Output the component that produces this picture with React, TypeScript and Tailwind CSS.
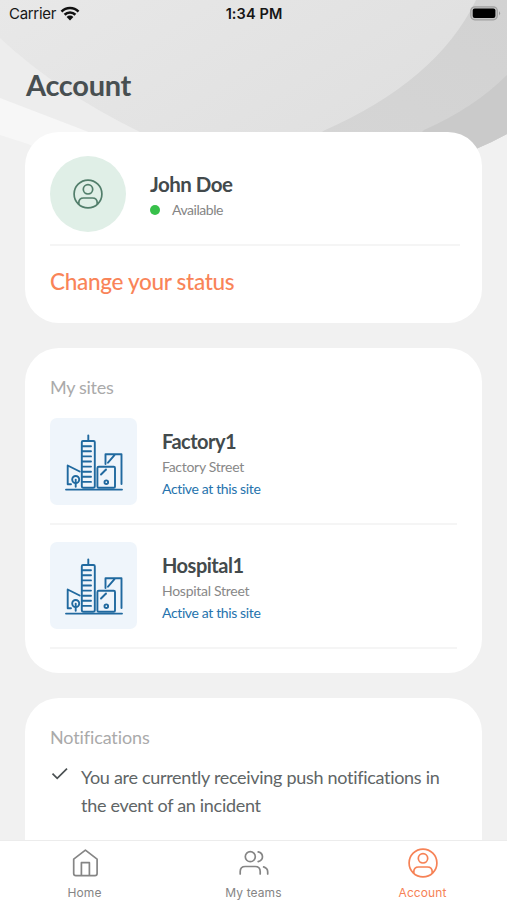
import React from 'react';

const UserCircleIcon: React.FC<{ className?: string }> = ({ className }) => (
  <svg viewBox="0 0 30 30" fill="none" stroke="currentColor" strokeWidth="1.7" className={className}>
    <circle cx="15" cy="15" r="13.9" />
    <circle cx="15" cy="10.3" r="4.7" />
    <path d="M5.8 25.2v-1.4c0-2.9 2-4.8 4.8-4.8h8.8c2.8 0 4.8 1.9 4.8 4.8v1.4" />
  </svg>
);

const HomeIcon: React.FC<{ className?: string }> = ({ className }) => (
  <svg viewBox="0 0 30 30" fill="none" stroke="currentColor" strokeWidth="1.7" strokeLinejoin="round" className={className}>
    <path d="M3.7 11.2 15.4 2.2l11.7 9v14.3a2.2 2.2 0 0 1-2.2 2.2h-19a2.2 2.2 0 0 1-2.2-2.2z" />
    <path d="M11.4 27.5V14.7h8v12.8" />
  </svg>
);

const TeamsIcon: React.FC<{ className?: string }> = ({ className }) => (
  <svg viewBox="0 0 30 30" fill="none" stroke="currentColor" strokeWidth="1.7" strokeLinecap="round" className={className}>
    <circle cx="11.3" cy="8.7" r="5" />
    <path d="M1.2 26v-2.4c0-3 2-5.1 5.1-5.1h9.8c3.1 0 5.1 2.1 5.1 5.1V26" />
    <path d="M19.2 3.9c5.7 1.5 5.7 8.2 0 9.7" />
    <path d="M24.6 18.9c2.6.8 4.1 2.6 4.1 5.1v2" />
  </svg>
);

const BuildingsIcon: React.FC = () => (
  <svg viewBox="0 0 58 58" fill="none" stroke="#20699f" strokeWidth="1.9" strokeLinecap="round" strokeLinejoin="round" className="h-[58px] w-[58px]">
    <path d="M1 55.6h56" />
    <path d="M23.3 1.5v5" />
    <path d="M18 7h10.5a1.3 1.3 0 0 1 1.3 1.3v43.7a1.8 1.8 0 0 1-1.8 1.8h-9.4a1.8 1.8 0 0 1-1.8-1.8V8.2A1.2 1.2 0 0 1 18 7z" />
    <path d="M17 12.2h9M17 17.3h9M17 22.4h9M17 27.5h9M17 32.6h9M17 37.7h9M17 42.8h9M17 47.9h9" />
    <path d="M33.7 32.7h15a1.3 1.3 0 0 1 1.3 1.3v18.5a1.3 1.3 0 0 1-1.3 1.3h-15a1.3 1.3 0 0 1-1.3-1.3V34a1.3 1.3 0 0 1 1.3-1.3z" />
    <path d="m36 40.5 5-5" />
    <circle cx="41.3" cy="48.2" r="1.8" />
    <path d="M40.5 30v-9.700h16V50M43 28.700l6.500-7.500" />
    <path d="M6 50.300H2.700V31.500l12 6" />
    <circle cx="10.700" cy="45.500" r="3.500" />
    <path d="M10.700 45.800v7" />
  </svg>
);

const CheckIcon: React.FC = () => (
  <svg viewBox="0 0 18 14" fill="none" stroke="#4b5153" strokeWidth="1.7" className="mt-1 h-3.5 w-[18px] shrink-0">
    <path d="M2.500 6.700 7.200 11.400 17 1.600" />
  </svg>
);

const HeaderBackground: React.FC = () => (
  <svg viewBox="0 0 507 160" className="absolute left-0 top-0 h-40 w-[507px]">
    <defs>
      <linearGradient id="base" x1="0" y1="0" x2="1" y2="0.5">
        <stop offset="0" stopColor="#e8e8e8" />
        <stop offset="1" stopColor="#dfdfdf" />
      </linearGradient>
      <linearGradient id="band" x1="0.3" y1="1" x2="1" y2="0">
        <stop offset="0" stopColor="#d5d5d5" />
        <stop offset="1" stopColor="#d2d2d2" />
      </linearGradient>
    </defs>
    <path d="M0 0h507v134q-29 16-62 26H0z" fill="url(#base)" />
    <path d="M0 38Q58 92 140 132V160H0z" fill="#ededed" />
    <path d="M0 98 86 131l64 29H0z" fill="#f7f7f7" />
    <path d="M0 135 28 144l30 16H0z" fill="#f1f1f1" />
    <path d="M476 0h31v134q-29 16-62 26H300L323 131Q437 81 476 0z" fill="url(#band)" />
    <path d="M507 75v59q-29 16-62 26h-50l29-30Q474 108 507 75z" fill="#cacaca" />
  </svg>
);

const StatusBar: React.FC = () => (
  <div className="grid h-7 shrink-0 grid-cols-3 items-center pl-[9px] pr-[6px] font-['Inter'] text-[15px] text-[#161616]">
    <div className="flex items-center gap-[6px]">
      <span className="tracking-[-0.3px]">Carrier</span>
      <svg viewBox="0 0 20 15" className="-ml-0.5 -mt-0.5 h-[15px] w-5">
        <path d="M1.5 5.6a12 12 0 0 1 17 0M4.6 8.7a7.7 7.7 0 0 1 10.8 0" fill="none" stroke="#111" strokeWidth="2.6" />
        <path d="M6.6 11a4.8 4.8 0 0 1 6.8 0L10 14.4z" fill="#111" />
      </svg>
    </div>
    <span className="-ml-0.5 text-center text-[14.5px] font-semibold tracking-[0.1px]">1:34 PM</span>
    <svg viewBox="0 0 31 15" className="-mt-0.5 h-[15px] w-[31px] justify-self-end">
      <rect x="0.8" y="0.8" width="26.5" height="13" rx="4" fill="#c4c4c4" stroke="#a0a0a0" strokeWidth="1.2" />
      <rect x="2.7" y="2.6" width="22.7" height="9.4" rx="2" fill="#000" />
      <path d="M29 5.2q2.2 2.1 0 4.2z" fill="#999" />
    </svg>
  </div>
);

interface SiteProps {
  name: string;
  street: string;
}

const SiteRow: React.FC<SiteProps> = ({ name, street }) => (
  <div className="flex h-[107px] items-start gap-[25px] border-b-2 border-[#f5f5f5]">
    <div className="flex h-[87px] w-[87px] items-center justify-center rounded-[7px] bg-[#eff5fb] pt-[2px]">
      <BuildingsIcon />
    </div>
    <div className="flex flex-col pt-[9px]">
      <h3 className="text-[20px] font-bold leading-[28px] tracking-[-0.5px] text-[#434a4c]">{name}</h3>
      <p className="pt-px text-[14px] leading-[22px] tracking-[-0.28px] text-[#888]">{street}</p>
      <p className="text-[14px] leading-[21px] tracking-[-0.37px] text-[#2673ad]">Active at this site</p>
    </div>
  </div>
);

const App: React.FC = () => {
  return (
    <div className="relative flex h-[900px] w-[507px] flex-col overflow-hidden bg-[#f1f1f1] font-['Lato',sans-serif]">
      <HeaderBackground />

      <div className="relative flex min-h-0 flex-1 flex-col overflow-hidden">
        <StatusBar />
        <h1 className="mt-9 h-[68px] shrink-0 pl-[26px] text-[29px] font-bold leading-[42px] tracking-[-0.3px] text-[#484f51]">
          Account
        </h1>

        <main className="flex flex-col gap-[25px] px-[25px]">
          {/* Profile */}
          <section className="h-[191px] shrink-0 rounded-[34px] bg-white pl-[25px] pr-[22px] pt-6">
            <div className="flex h-[90px] items-start gap-6 border-b-2 border-[#f5f5f5]">
              <div className="flex h-[76px] w-[76px] items-center justify-center rounded-full bg-[#e0efe7]">
                <UserCircleIcon className="h-[30px] w-[30px] text-[#527e6b]" />
              </div>
              <div className="pt-[13px]">
                <h2 className="text-[20.5px] font-bold leading-[30px] tracking-[-0.5px] text-[#434a4c]">John Doe</h2>
                <div className="-mt-px flex items-center gap-3 leading-[23px]">
                  <span className="h-[10px] w-[10px] rounded-full bg-[#37c04a]" />
                  <span className="text-[14px] tracking-[-0.45px] text-[#858585]">Available</span>
                </div>
              </div>
            </div>
            <button className="mt-[19px] text-[22.5px] font-medium leading-[34px] tracking-[-0.3px] text-[#f98458]">
              Change your status
            </button>
          </section>

          {/* Sites */}
          <section className="h-[325px] shrink-0 rounded-[34px] bg-white px-[25px] pt-6">
            <h2 className="h-[46px] text-[18px] leading-[30px] tracking-[-0.3px] text-[#aaa]">My sites</h2>
            <div className="flex flex-col gap-[17px]">
              <SiteRow name="Factory1" street="Factory Street" />
              <SiteRow name="Hospital1" street="Hospital Street" />
            </div>
          </section>

          {/* Notifications */}
          <section className="h-[200px] shrink-0 rounded-[34px] bg-white px-[25px] pt-6">
            <h2 className="text-[18px] leading-[30px] tracking-[-0.12px] text-[#aaa]">Notifications</h2>
            <div className="mt-[11px] flex gap-[13px]">
              <CheckIcon />
              <p className="whitespace-nowrap text-[18px] leading-[28px] tracking-[-0.3px] text-[#606566]">
                You are currently receiving push notifications in
                <br />
                the event of an incident
              </p>
            </div>
          </section>
        </main>
      </div>

      <nav className="relative grid h-[60px] shrink-0 grid-cols-3 border-t border-[#ececec] bg-white font-['Inter'] text-[12px] text-[#858585]">
        <div className="flex flex-col items-center pt-[7px]">
          <HomeIcon className="h-[30px] w-[30px]" />
          <span className="mt-[6px] leading-[18px] tracking-[0.1px]">Home</span>
        </div>
        <div className="flex flex-col items-center pt-[7px]">
          <TeamsIcon className="h-[30px] w-[30px]" />
          <span className="mt-[6px] leading-[18px] tracking-[0.1px]">My teams</span>
        </div>
        <div className="flex flex-col items-center pt-[7px] text-[#f68256]">
          <UserCircleIcon className="h-[30px] w-[30px]" />
          <span className="mt-[6px] leading-[18px] tracking-[0.1px]">Account</span>
        </div>
      </nav>
    </div>
  );
};

export default App;
